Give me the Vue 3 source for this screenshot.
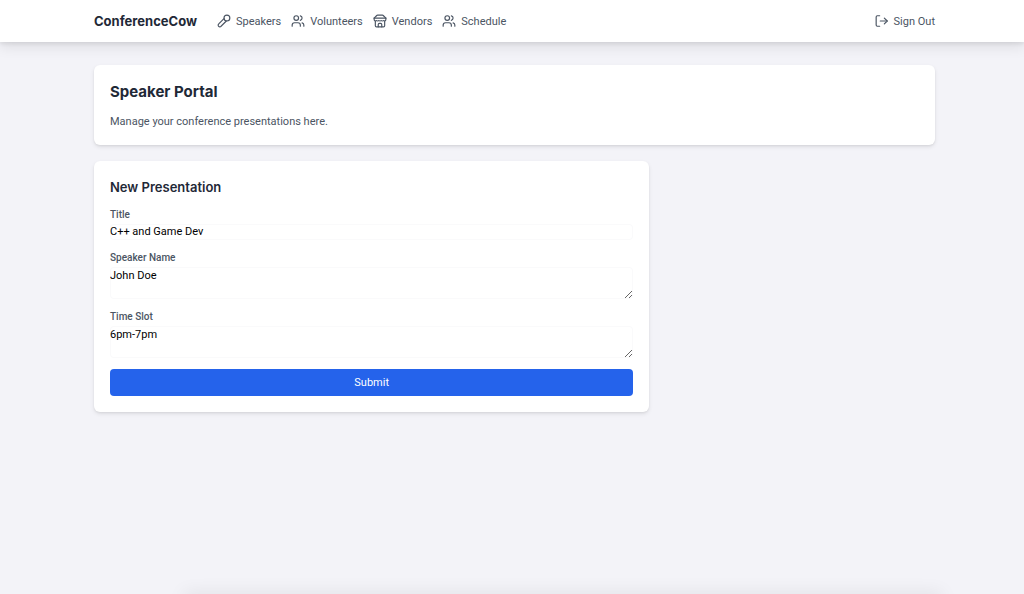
<script setup>
import { ref } from 'vue'

const links = [
  { label: 'Speakers', icon: 'mic' },
  { label: 'Volunteers', icon: 'users' },
  { label: 'Vendors', icon: 'store' },
  { label: 'Schedule', icon: 'users' },
]

const icons = {
  mic: [
    'm12 8-9.04 9.06a2.82 2.82 0 1 0 3.98 3.98L16 12',
    'M17 2a5 5 0 1 0 0 10 5 5 0 0 0 0-10z',
  ],
  users: [
    'M16 21v-2a4 4 0 0 0-4-4H6a4 4 0 0 0-4 4v2',
    'M9 3a4 4 0 1 0 0 8 4 4 0 0 0 0-8z',
    'M22 21v-2a4 4 0 0 0-3-3.87',
    'M16 3.13a4 4 0 0 1 0 7.75',
  ],
  store: [
    'm2 7 4.41-4.41A2 2 0 0 1 7.83 2h8.34a2 2 0 0 1 1.42.59L22 7',
    'M4 12v8a2 2 0 0 0 2 2h12a2 2 0 0 0 2-2v-8',
    'M15 22v-4a2 2 0 0 0-2-2h-2a2 2 0 0 0-2 2v4',
    'M2 7h20',
    'M22 7v3a2 2 0 0 1-2 2 2.7 2.7 0 0 1-1.59-.63.7.7 0 0 0-.82 0A2.7 2.7 0 0 1 16 12a2.7 2.7 0 0 1-1.59-.63.7.7 0 0 0-.82 0A2.7 2.7 0 0 1 12 12a2.7 2.7 0 0 1-1.59-.63.7.7 0 0 0-.82 0A2.7 2.7 0 0 1 8 12a2.7 2.7 0 0 1-1.59-.63.7.7 0 0 0-.82 0A2.7 2.7 0 0 1 4 12a2 2 0 0 1-2-2V7',
  ],
}

const title = ref('C++ and Game Dev')
const speaker = ref('John Doe')
const slot = ref('6pm-7pm')
</script>

<template>
  <div class="page">
    <header class="header">
      <div class="container bar">
        <a class="brand" href="#">ConferenceCow</a>
        <nav class="nav">
          <a v-for="link in links" :key="link.label" class="link" href="#">
            <svg class="icon" viewBox="0 0 24 24" aria-hidden="true">
              <path v-for="d in icons[link.icon]" :key="d" :d="d" />
            </svg>
            <span>{{ link.label }}</span>
          </a>
        </nav>
        <button class="link sign-out" type="button">
          <svg class="icon" viewBox="0 0 24 24" aria-hidden="true">
            <path d="M8 3H4a2 2 0 0 0-2 2v14a2 2 0 0 0 2 2h4" />
            <path d="m16 17 5-5-5-5" />
            <path d="M21 12H9" />
          </svg>
          <span>Sign Out</span>
        </button>
      </div>
    </header>

    <main class="container main">
      <section class="card intro">
        <h1>Speaker Portal</h1>
        <p>Manage your conference presentations here.</p>
      </section>

      <div class="columns">
        <form class="card form" @submit.prevent>
          <h2>New Presentation</h2>
          <div class="field">
            <label for="title">Title</label>
            <input id="title" v-model="title" type="text" />
          </div>
          <div class="field">
            <label for="speaker">Speaker Name</label>
            <textarea id="speaker" v-model="speaker" rows="2"></textarea>
          </div>
          <div class="field">
            <label for="slot">Time Slot</label>
            <textarea id="slot" v-model="slot" rows="2"></textarea>
          </div>
          <button class="submit" type="submit">Submit</button>
        </form>
      </div>
    </main>
    <div class="edge"></div>
  </div>
</template>

<style>
body {
  background: #f3f3f8;
}
</style>

<style scoped>
.page {
  position: relative;
  box-sizing: border-box;
  min-height: 100vh;
  overflow: hidden;
  color: #1f2937;
  background: #f3f3f8;
  font-family: Roboto, Inter, "Liberation Sans", sans-serif;
  font-size: 11px;
  line-height: 16px;
}

.page * {
  box-sizing: border-box;
}

.header {
  background: #fff;
  box-shadow: 0 6px 12px rgb(0 0 0 / 8%), 0 2px 4px rgb(0 0 0 / 8%);
}

.container {
  padding: 0 89px 0 94px;
}

.bar {
  display: flex;
  align-items: center;
  min-height: 42px;
}

.brand {
  margin-right: 20px;
  color: #1f2937;
  font-family: Inter, sans-serif;
  font-size: 13px;
  font-weight: 700;
  text-decoration: none;
}

.nav {
  display: flex;
  gap: 10px;
}

.link {
  display: flex;
  align-items: center;
  gap: 5px;
  padding: 0;
  border: 0;
  background: none;
  color: #4b5563;
  font: inherit;
  line-height: 18px;
  text-decoration: none;
}

.link span {
  padding-top: 1px;
}

.sign-out {
  margin-left: auto;
  cursor: pointer;
}

.icon {
  width: 14px;
  height: 14px;
  fill: none;
  stroke: currentColor;
  stroke-width: 2;
  stroke-linecap: round;
  stroke-linejoin: round;
}

.main {
  padding-top: 23px;
}

.card {
  padding: 16px;
  border-radius: 6px;
  background: #fff;
  box-shadow: 0 2px 4px rgb(0 0 0 / 9%), 0 1px 2px rgb(0 0 0 / 5%);
}

.intro {
  margin-bottom: 16px;
}

h1,
h2,
p {
  margin: 0;
}

h1 {
  margin-bottom: 11px;
  font-family: Inter, sans-serif;
  font-size: 15px;
  font-weight: 700;
  line-height: 22px;
}

p {
  color: #4b5563;
  line-height: 15px;
}

.columns {
  display: grid;
  grid-template-columns: 2fr 1fr;
  gap: 8px;
}

h2 {
  margin-bottom: 11px;
  font-family: Inter, sans-serif;
  font-size: 13px;
  font-weight: 600;
  line-height: 20px;
}

.field {
  margin-bottom: 11px;
}

label {
  display: block;
  margin-bottom: 3px;
  color: #4b5563;
  font-size: 10px;
  font-weight: 500;
  line-height: 13px;
}

input,
textarea {
  display: block;
  width: 100%;
  margin: 0;
  padding: 1px 0;
  border: 0;
  border-radius: 4px;
  background: #fff;
  box-shadow: inset 0 0 0 1px #fafafb;
  color: #000;
  font: inherit;
}

input {
  height: 16px;
}

textarea {
  line-height: 15px;
  resize: vertical;
}

.submit {
  display: block;
  width: 100%;
  padding: 6px 11px 5px;
  border: 0;
  border-radius: 4px;
  background: #2563eb;
  color: #fff;
  font: inherit;
  cursor: pointer;
}

.edge {
  position: absolute;
  top: 100%;
  right: 8%;
  left: 18%;
  height: 10px;
  box-shadow: 0 0 18px rgb(0 0 0 / 10%);
}
</style>
